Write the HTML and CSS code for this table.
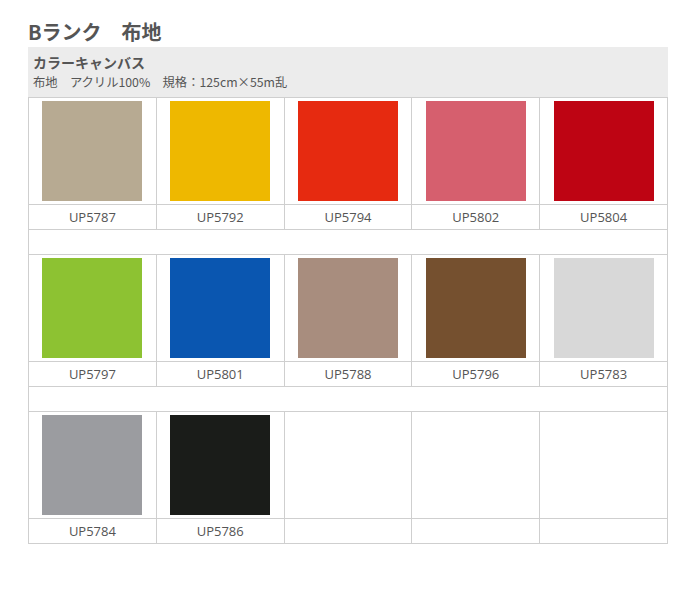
FILE: index.html
```html
<!DOCTYPE html>
<html lang="ja">
<head>
    <meta charset="UTF-8">
    <title>Bランク 布地</title>
    <link rel="stylesheet" href="styles.css">
</head>
<body>
    <div class="fabric-page">
        <h1>Bランク　布地</h1>
        <div class="fabric-head">
            <h2>カラーキャンバス</h2>
            <p>布地　アクリル100%　規格：125cm×55m乱</p>
        </div>
        <table class="fabric-table">
            <tr class="swatch-row">
                <td><div class="swatch" style="background-color:#b7aa92"></div></td>
                <td><div class="swatch" style="background-color:#eeb800"></div></td>
                <td><div class="swatch" style="background-color:#e62a10"></div></td>
                <td><div class="swatch" style="background-color:#d65f6e"></div></td>
                <td><div class="swatch" style="background-color:#be0413"></div></td>
            </tr>
            <tr class="code-row">
                <td>UP5787</td><td>UP5792</td><td>UP5794</td><td>UP5802</td><td>UP5804</td>
            </tr>
            <tr class="spacer-row"><td colspan="5"></td></tr>
            <tr class="swatch-row">
                <td><div class="swatch" style="background-color:#8dc232"></div></td>
                <td><div class="swatch" style="background-color:#0a56b0"></div></td>
                <td><div class="swatch" style="background-color:#a88d7e"></div></td>
                <td><div class="swatch" style="background-color:#75502f"></div></td>
                <td><div class="swatch" style="background-color:#d8d8d8"></div></td>
            </tr>
            <tr class="code-row">
                <td>UP5797</td><td>UP5801</td><td>UP5788</td><td>UP5796</td><td>UP5783</td>
            </tr>
            <tr class="spacer-row"><td colspan="5"></td></tr>
            <tr class="swatch-row">
                <td><div class="swatch" style="background-color:#9b9ca0"></div></td>
                <td><div class="swatch" style="background-color:#1a1c19"></div></td>
                <td></td><td></td><td></td>
            </tr>
            <tr class="code-row">
                <td>UP5784</td><td>UP5786</td><td></td><td></td><td></td>
            </tr>
        </table>
    </div>
</body>
</html>
```

FILE: styles.css
```css
body {
    margin: 0;
    padding: 0;
    background-color: #fff;
    color: #555;
    font-family: "Noto Sans CJK JP", "Noto Sans", sans-serif;
}

.fabric-page {
    width: 640px;
    margin-left: 28px;
    padding-top: 18px;
}

.fabric-page h1 {
    font-size: 20px;
    line-height: 28px;
    margin: 0 0 1px;
    font-weight: bold;
    color: #555;
}

.fabric-head {
    background-color: #ececec;
    height: 50px;
    padding: 5px 5px 0;
    box-sizing: border-box;
}

.fabric-head h2 {
    font-size: 14px;
    line-height: 20px;
    margin: 0;
    font-weight: bold;
}

.fabric-head p {
    font-size: 12.3px;
    line-height: 20px;
    margin: 0;
}

.fabric-table {
    border-collapse: collapse;
    width: 640px;
    table-layout: fixed;
}

.fabric-table td {
    border: 1px solid #cfcfcf;
    padding: 0;
    text-align: center;
}

.swatch-row td {
    height: 106px;
}

.swatch {
    width: 100px;
    height: 100px;
    margin: 0 auto;
}

.code-row td {
    height: 24px;
    font-family: "Open Sans", "Noto Sans", sans-serif;
    font-size: 13px;
}

.spacer-row td {
    height: 24px;
}
```
